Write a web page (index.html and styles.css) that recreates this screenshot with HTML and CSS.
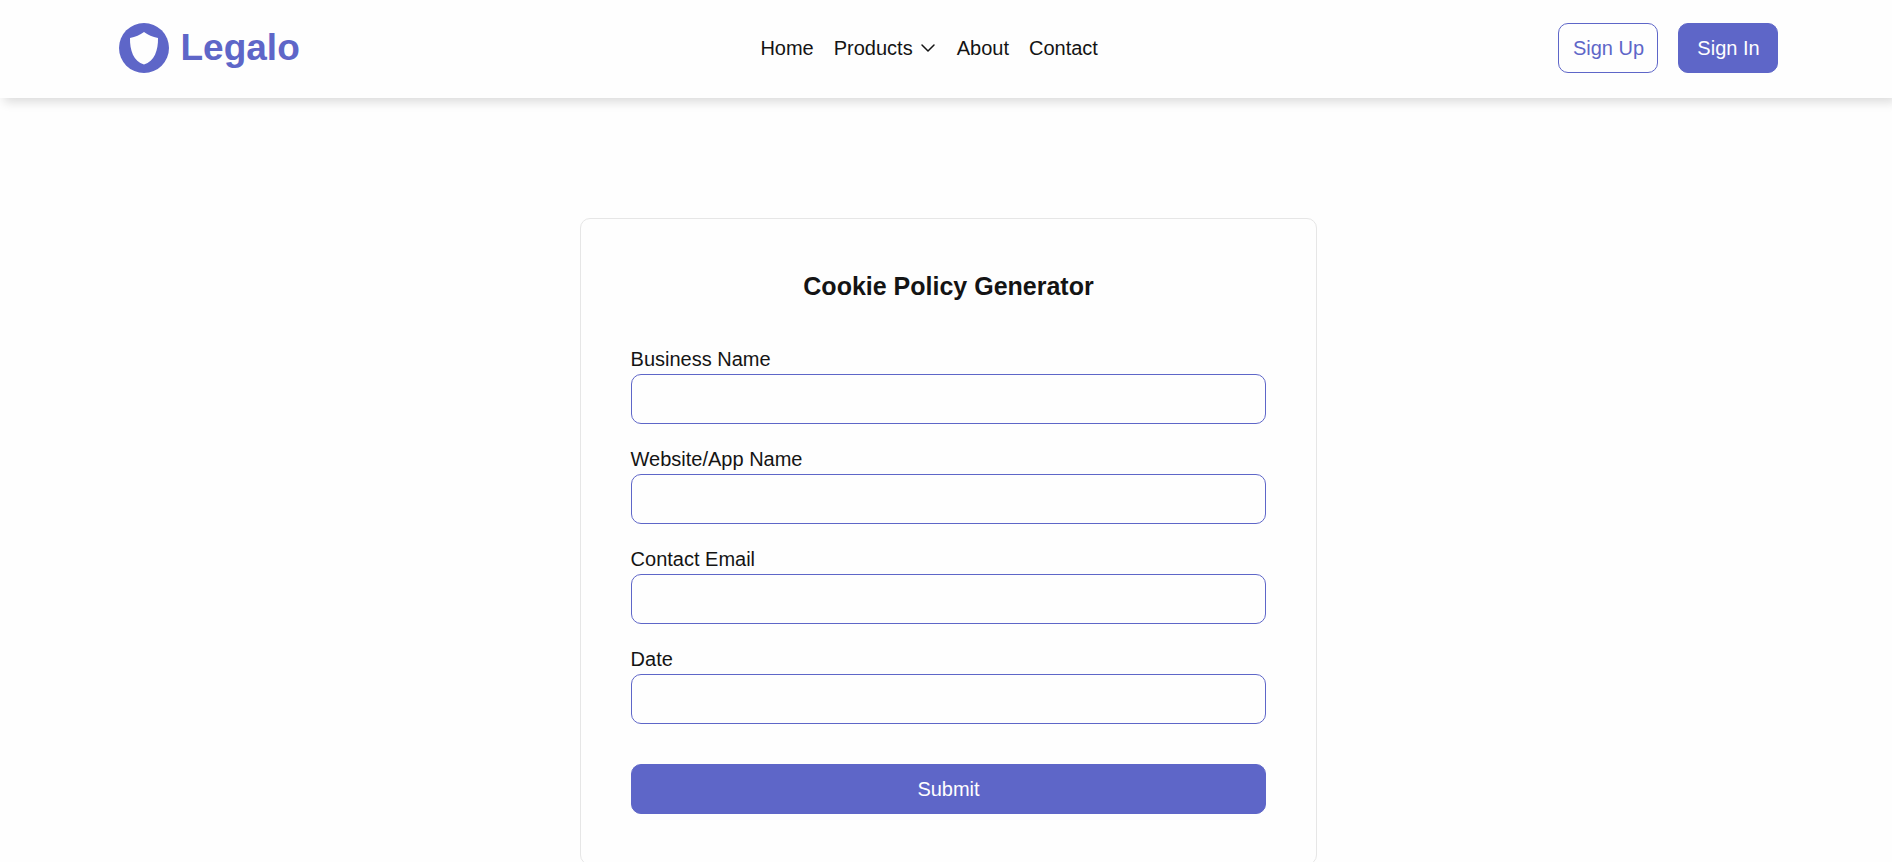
FILE: index.html
```html
<!DOCTYPE html>
<html lang="en">
<head>
<meta charset="utf-8">
<meta name="viewport" content="width=device-width, initial-scale=1">
<title>Cookie Policy Generator - Legalo</title>
<link rel="stylesheet" href="styles.css">
</head>
<body>
<header class="header">
  <a class="logo" href="#">
    <svg class="logo-mark" viewBox="0 0 50 50" aria-hidden="true">
      <circle class="logo-disc" cx="25" cy="25" r="25"/>
      <path class="logo-shield" d="M25 9C29 12 33.500 14 39 15C39.300 27 35.500 38.500 25 41.500C14.500 38.500 10.700 27 11 15C16.500 14 21 12 25 9Z"/>
    </svg>
    <span>Legalo</span>
  </a>
  <nav class="nav">
    <a class="nav-link" href="#">Home</a>
    <a class="nav-link" href="#">Products
      <svg class="chevron" viewBox="0 0 18 18" aria-hidden="true"><path d="M3 6l6 6 6-6"/></svg>
    </a>
    <a class="nav-link" href="#">About</a>
    <a class="nav-link" href="#">Contact</a>
  </nav>
  <div class="actions">
    <button class="btn btn-outline" type="button">Sign Up</button>
    <button class="btn" type="button">Sign In</button>
  </div>
</header>
<main class="main">
  <form class="card">
    <h1 class="title">Cookie Policy Generator</h1>
    <div class="fields">
      <div class="field">
        <label for="business">Business Name</label>
        <input id="business" type="text">
      </div>
      <div class="field">
        <label for="website">Website/App Name</label>
        <input id="website" type="text">
      </div>
      <div class="field">
        <label for="email">Contact Email</label>
        <input id="email" type="email">
      </div>
      <div class="field">
        <label for="date">Date</label>
        <input id="date" type="text">
      </div>
    </div>
    <button class="btn btn-submit" type="submit">Submit</button>
  </form>
</main>
</body>
</html>
```
FILE: styles.css
```css
:root {
  --brand: #5e66c8;
  --ink: #141414;
  --paper: #fefefe;
}

* {
  box-sizing: border-box;
}

body {
  margin: 0;
  background: var(--paper);
  color: var(--ink);
  font-family: "Liberation Sans", Arial, sans-serif;
  font-size: 20px;
  line-height: 30px;
}

a {
  color: inherit;
  text-decoration: none;
}

.header {
  display: flex;
  align-items: center;
  justify-content: space-between;
  padding: 23px 6% 25px;
  background: var(--paper);
  box-shadow: 4px 4px 10px rgba(0, 0, 0, 0.14);
}

.logo {
  display: flex;
  align-items: center;
  gap: 12px;
  padding-left: 5px;
  color: var(--brand);
  font-size: 37px;
  font-weight: bold;
}

.logo-mark {
  width: 50px;
  height: 50px;
}

.logo-disc {
  fill: var(--brand);
}

.logo-shield {
  fill: var(--paper);
}

.nav {
  display: flex;
  gap: 20px;
}

.nav-link {
  display: flex;
  align-items: center;
  gap: 6px;
}

.chevron {
  width: 18px;
  height: 18px;
  fill: none;
  stroke: currentColor;
  stroke-width: 1.500;
  stroke-linecap: round;
  stroke-linejoin: round;
}

.actions {
  display: flex;
  gap: 20px;
}

.btn {
  width: 100px;
  height: 50px;
  padding: 0;
  border: 1px solid var(--brand);
  border-radius: 10px;
  background: var(--brand);
  color: var(--paper);
  font: inherit;
  cursor: pointer;
}

.btn-outline {
  background: var(--paper);
  color: var(--brand);
}

.btn-submit {
  width: 100%;
}

.main {
  display: flex;
  justify-content: center;
  padding: 120px 0 120px 5px;
}

.card {
  display: flex;
  flex-direction: column;
  gap: 40px;
  width: 39vw;
  min-width: 320px;
  padding: 50px;
  border: 1px solid #e6e6e6;
  border-radius: 10px;
}

.title {
  margin: 0;
  font-size: 25px;
  line-height: 35px;
  text-align: center;
}

.fields {
  display: flex;
  flex-direction: column;
  gap: 20px;
}

.field {
  display: flex;
  flex-direction: column;
}

.field input {
  height: 50px;
  padding: 0 15px;
  border: 1px solid var(--brand);
  border-radius: 10px;
  background: var(--paper);
  color: inherit;
  font: inherit;
}
```
